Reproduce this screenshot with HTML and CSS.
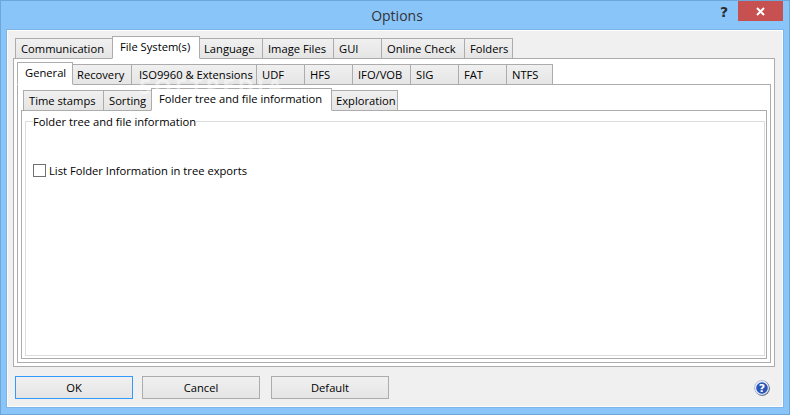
FILE: index.html
```html
<!DOCTYPE html>
<html lang="en">
<head>
<meta charset="utf-8">
<title>Options</title>
<link rel="stylesheet" href="styles.css">
</head>
<body>
<div class="window">
  <header class="titlebar">
    <span class="title">Options</span>
    <span class="help-btn">?</span>
    <span class="close-btn">
      <svg width="9" height="9" viewBox="0 0 9 9"><path d="M1 1L8 8M8 1L1 8" stroke="#fff" stroke-width="2" fill="none"/></svg>
    </span>
  </header>
  <main class="client">
    <div class="tabs tabs-1">
      <span class="tab w97">Communication</span>
      <span class="tab active w87">File System(s)</span>
      <span class="tab tight w63">Language</span>
      <span class="tab w71">Image Files</span>
      <span class="tab w48">GUI</span>
      <span class="tab w83">Online Check</span>
      <span class="tab w48">Folders</span>
    </div>
    <div class="pane pane-1">
      <div class="tabs tabs-2">
        <span class="tab active w55">General</span>
        <span class="tab tight w59">Recovery</span>
        <span class="tab wide w125">ISO9960 &amp; Extensions</span>
        <span class="tab w48">UDF</span>
        <span class="tab w48">HFS</span>
        <span class="tab w58">IFO/VOB</span>
        <span class="tab w48">SIG</span>
        <span class="tab w48">FAT</span>
        <span class="tab w46">NTFS</span>
      </div>
      <div class="pane pane-2">
        <div class="tabs tabs-3">
          <span class="tab w80">Time stamps</span>
          <span class="tab w48">Sorting</span>
          <span class="tab active w180">Folder tree and file information</span>
          <span class="tab tight w66">Exploration</span>
        </div>
        <div class="pane pane-3">
          <fieldset class="group">
            <legend class="group-label">Folder tree and file information</legend>
            <label class="check"><span class="box"></span>List Folder Information in tree exports</label>
          </fieldset>
        </div>
      </div>
    </div>
    <footer class="buttons">
      <span class="btn default">OK</span>
      <span class="btn">Cancel</span>
      <span class="btn">Default</span>
      <svg class="help-icon" width="16" height="16" viewBox="0 0 16 16">
        <circle cx="8.3" cy="8.3" r="7.5" fill="#33415e"/>
        <circle cx="7.8" cy="7.8" r="7.3" fill="#eef2f8" stroke="#8fa4c8" stroke-width="0.6"/>
        <circle cx="8" cy="8" r="5.8" fill="#2a55b8"/>
        <text x="8" y="12" text-anchor="middle" class="help-mark">?</text>
      </svg>
    </footer>
  </main>
  <div class="watermark">SOFTPEDIA</div>
</div>
</body>
</html>
```

FILE: styles.css
```css
* { box-sizing: border-box; }
html, body { margin: 0; padding: 0; }
body {
  width: 790px;
  height: 415px;
  overflow: hidden;
  font-family: "Open Sans", "Noto Sans", sans-serif;
  font-size: 11.2px;
  color: #000;
}
.window {
  position: relative;
  width: 790px;
  height: 415px;
  background: #8ac5fa;
  border: 1px solid #6fa6d8;
  padding: 0 6px 7px 6px;
  display: flex;
  flex-direction: column;
}
.titlebar {
  height: 29px;
  flex: none;
  position: relative;
  display: flex;
  justify-content: center;
  align-items: center;
}
.title { font-size: 14px; color: #333; padding: 0 0 1px 4px; }
.help-btn {
  position: absolute;
  right: 55px;
  top: 3px;
  font: bold 14px "DejaVu Sans", sans-serif;
  color: #2b2b2b;
}
.close-btn {
  position: absolute;
  right: 0;
  top: 0;
  width: 45px;
  height: 20px;
  background: #c75050;
  display: flex;
  align-items: center;
  justify-content: center;
}
.client {
  flex: 1;
  background: #f0f0f0;
  border: 1px solid #fff;
  box-shadow: 0 0 0 1px #7db5e8;
  padding: 5px 7px 0 5px;
  display: flex;
  flex-direction: column;
}
.tabs { display: flex; align-items: flex-end; position: relative; z-index: 1; flex: none; }
.tabs-1 { height: 23px; margin-left: 3px; margin-bottom: -1px; }
.tabs-2 { height: 26px; margin-left: 1px; margin-bottom: -1px; }
.tabs-3 { height: 26px; margin-left: 3px; margin-bottom: -1px; }
.tab {
  height: 21px;
  background: linear-gradient(#f0f0f0, #e5e5e5);
  border: 1px solid #acacac;
  margin-left: -1px;
  padding-left: 5px;
  line-height: 19px;
  white-space: nowrap;
  flex: none;
}
.tab.wide { padding-left: 7px; }
.tab.tight { padding-left: 4px; }
.tab.active {
  height: 23px;
  background: #fff;
  border-bottom-color: #fff;
  padding-left: 7px;
  line-height: 19px;
  position: relative;
  z-index: 2;
}
.w46 { width: 47px; } .w48 { width: 49px; } .w55 { width: 56px; }
.w58 { width: 59px; } .w59 { width: 60px; } .w63 { width: 64px; }
.w66 { width: 67px; } .w71 { width: 72px; } .w80 { width: 81px; }
.w83 { width: 84px; } .w87 { width: 88px; } .w97 { width: 98px; }
.w125 { width: 126px; } .w180 { width: 181px; }
.pane { background: #fff; border: 1px solid #acacac; display: flex; flex-direction: column; }
.pane-1 { height: 309px; width: 762px; padding: 0 3px 3px 3px; flex: none; }
.pane-2 { flex: 1; padding: 0 3px 3px 3px; }
.pane-3 { flex: 1; padding: 0 1px 2px 3px; }
.group {
  flex: 1;
  margin: 3px 0 0 0;
  padding: 0 7px;
  border: 1px solid #dcdcdc;
  min-width: 0;
}
.group-label { padding: 0; line-height: 15px; }
.check { display: flex; align-items: center; line-height: 13px; margin-top: 35px; gap: 3px; }
.box { width: 13px; height: 13px; border: 1px solid #707070; background: #fff; flex: none; }
.buttons {
  display: flex;
  align-items: center;
  margin-top: 9px;
  margin-left: 2px;
}
.btn {
  width: 118px;
  height: 23px;
  background: linear-gradient(#f0f0f0, #e5e5e5);
  border: 1px solid #acacac;
  text-align: center;
  line-height: 21px;
}
.btn + .btn { margin-left: 9px; }
.btn + .btn + .btn { margin-left: 11px; }
.btn.default { border-color: #3399ff; }
.help-icon { margin-left: auto; margin-right: 5px; }
.help-mark { font: bold 11px "DejaVu Sans", sans-serif; fill: #fff; }
.watermark {
  position: absolute;
  left: 138px;
  top: 69px;
  z-index: 5;
  font-size: 22px;
  font-weight: 700;
  letter-spacing: 3px;
  color: #fff;
  opacity: 0.45;
  pointer-events: none;
}
```
